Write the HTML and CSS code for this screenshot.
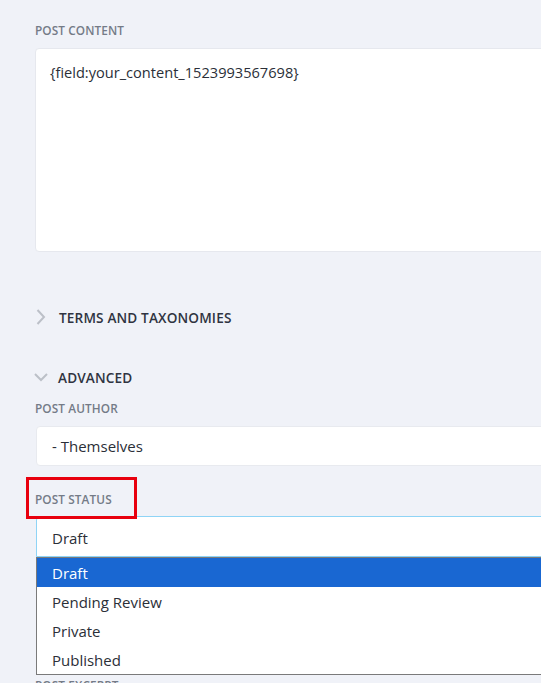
FILE: index.html
```html
<!DOCTYPE html>
<html>
<head>
<meta charset="utf-8">
<link rel="stylesheet" href="styles.css">
</head>
<body>
<div class="page">
  <div class="form">
    <div class="field">
      <div class="label">POST CONTENT</div>
      <div class="textarea">{field:your_content_1523993567698}</div>
    </div>

    <div class="section section-terms">
      <svg class="chev" width="12" height="18" viewBox="0 0 12 18"><path d="M2.5 2 L9 9 L2.5 16" fill="none" stroke="#bcc0c8" stroke-width="2"/></svg>
      <span class="section-title">TERMS AND TAXONOMIES</span>
    </div>

    <div class="section section-adv">
      <svg class="chev" width="14" height="10" viewBox="0 0 14 10"><path d="M1 2 L7 8 L13 2" fill="none" stroke="#bcc0c8" stroke-width="2"/></svg>
      <span class="section-title">ADVANCED</span>
    </div>

    <div class="field field-author">
      <div class="label">POST AUTHOR</div>
      <div class="select">- Themselves</div>
    </div>

    <div class="field field-status">
      <div class="label label-marked">POST STATUS<span class="mark"></span></div>
      <div class="select select-focus">Draft</div>
      <div class="behind">
        <div class="label">POST EXCERPT</div>
      </div>
      <ul class="dropdown">
        <li class="opt opt-active">Draft</li>
        <li class="opt">Pending Review</li>
        <li class="opt">Private</li>
        <li class="opt">Published</li>
      </ul>
    </div>
  </div>
</div>
</body>
</html>
```

FILE: styles.css
```css
html, body {
  margin: 0;
  padding: 0;
  height: 683px;
  overflow: hidden;
  background: #f0f2f8;
}
body {
  font-family: "Open Sans", "Noto Sans", sans-serif;
  color: #2b2f38;
}
.page {
  padding: 22px 0 0 35px;
}
.form {
  width: 640px;
}
.label {
  font-size: 11.8px;
  line-height: 16px;
  font-weight: 600;
  color: #747b87;
  letter-spacing: 0.1px;
}
.textarea {
  margin-top: 10px;
  height: 178px;
  background: #fff;
  border: 1px solid #e6e8ee;
  border-radius: 4px;
  padding: 12px 14px;
  font-size: 14.6px;
  line-height: 22px;
  color: #2b2f38;
}
.section {
  display: flex;
  align-items: center;
  gap: 12px;
  height: 20px;
}
.section-terms {
  margin-top: 55px;
}
.section-adv {
  margin-top: 40px;
}
.section-adv .chev { margin-left: -1px; margin-right: -2px; }
.section-title {
  font-size: 13.6px;
  font-weight: 600;
  color: #2f3441;
  letter-spacing: 0.15px;
}
.field-author {
  margin-top: 13px;
}
.select {
  margin-top: 10px;
  margin-left: 1px;
  height: 38px;
  background: #fff;
  border: 1px solid #e8eaef;
  border-radius: 4px;
  padding: 0 15px;
  font-size: 15px;
  line-height: 38px;
}
.field-status {
  position: relative;
  margin-top: 25px;
}
.label-marked {
  position: relative;
}
.mark {
  position: absolute;
  left: -9px;
  top: -14px;
  width: 105px;
  height: 36px;
  border: 3px solid #e8000e;
}
.select-focus {
  margin-top: 9px;
  border-color: #8fd4f6;
  border-radius: 4px 0 0 0;
  height: 39px;
  line-height: 42px;
}
.behind {
  padding-top: 120px;
}
.dropdown {
  position: absolute;
  top: 66px;
  left: 1px;
  right: 0;
  margin: 0;
  padding: 0;
  list-style: none;
  background: #fff;
  border: 1px solid #7a7a7a;
}
.opt {
  height: 29px;
  line-height: 30px;
  padding-left: 15px;
  font-size: 15px;
  color: #2b2f38;
}
.opt-active {
  height: 29px;
  background: #1967d2;
  color: #fff;
}
```
